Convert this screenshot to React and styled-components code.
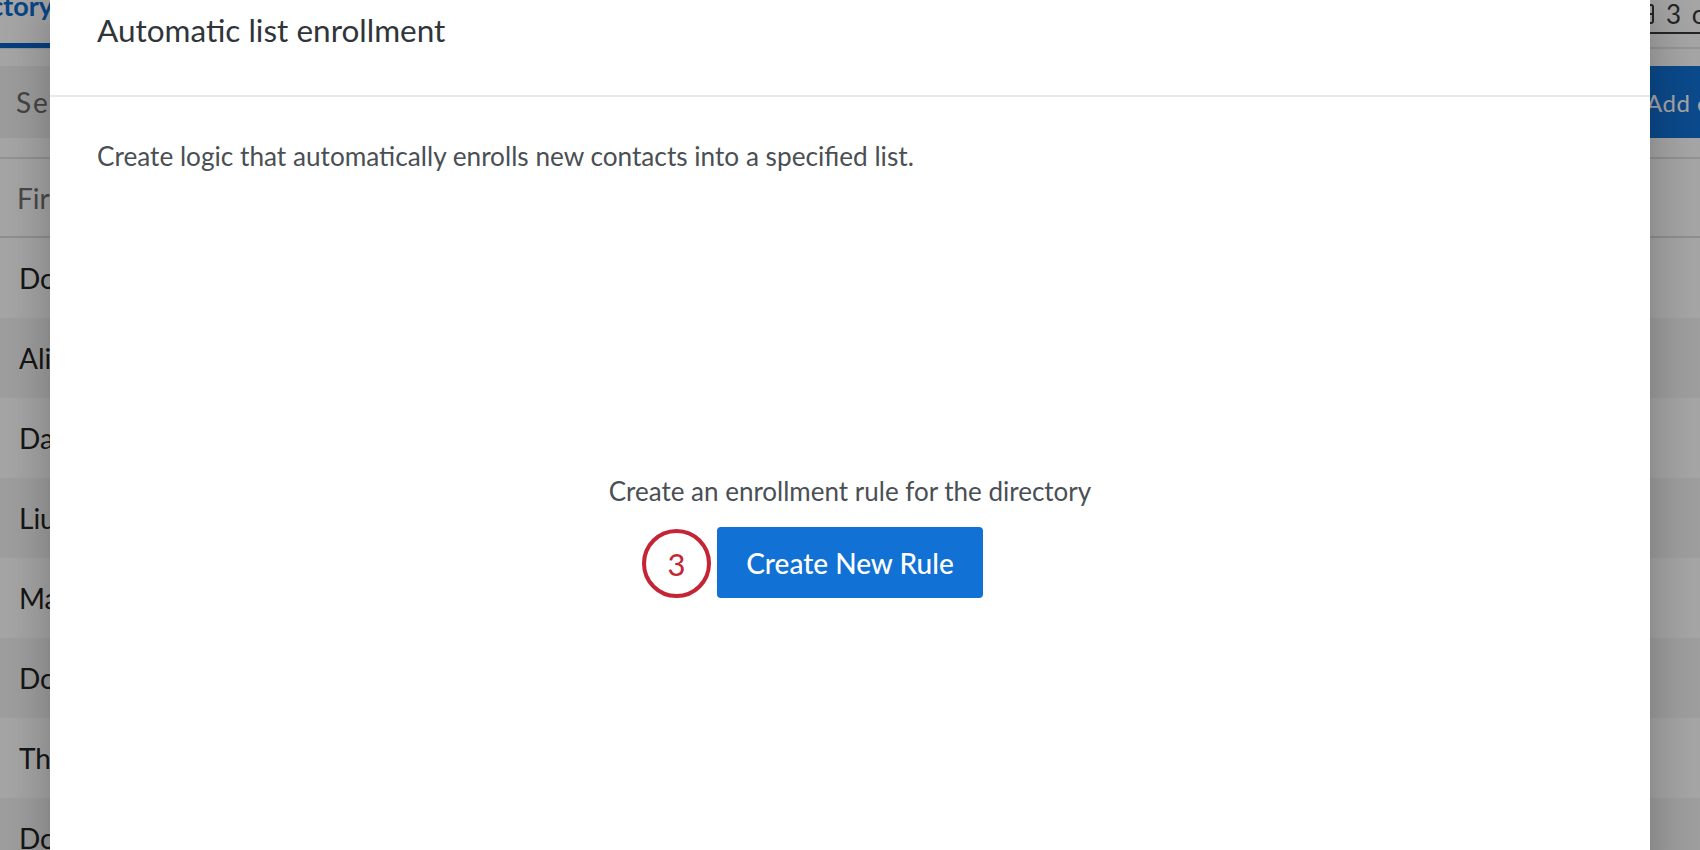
import React from "react";
import styled, { createGlobalStyle } from "styled-components";

const GlobalStyle = createGlobalStyle`
  html, body {
    margin: 0;
    padding: 0;
    background: #ffffff;
    font-family: Lato, "Open Sans", "Liberation Sans", sans-serif;
  }
`;

const rows = ["Dora", "Alice", "Daniel", "Liu", "Maria", "Dominic", "Thomas", "Donna"];

const App = () => {
  return (
    <Page>
      <GlobalStyle />
      <Directory>
        <TopBar>
          <Tab>Directory</Tab>
          <Selection>
            <svg width="14" height="20" viewBox="0 0 14 20" fill="none" stroke="#3a3a3a" strokeWidth="2">
              <rect x="1" y="1" width="12" height="18" rx="2" />
              <line x1="1" y1="10" x2="13" y2="10" />
            </svg>
            <span>3 of 8 selected</span>
          </Selection>
        </TopBar>
        <Toolbar>
          <Search>Search contacts</Search>
          <AddButton>Add contacts</AddButton>
        </Toolbar>
        <HeaderRow>First Name</HeaderRow>
        {rows.map((name, i) => (
          <Row key={i} $striped={i % 2 === 1}>
            {name}
          </Row>
        ))}
      </Directory>

      <Overlay />

      <Modal>
        <ModalHeader>
          <Title>Automatic list enrollment</Title>
        </ModalHeader>
        <ModalBody>
          <Description>
            Create logic that automatically enrolls new contacts into a specified list.
          </Description>
          <Empty>
            <EmptyText>Create an enrollment rule for the directory</EmptyText>
            <ButtonWrap>
              <Marker>3</Marker>
              <PrimaryButton>Create New Rule</PrimaryButton>
            </ButtonWrap>
          </Empty>
        </ModalBody>
      </Modal>
    </Page>
  );
};

const Page = styled.div`
  position: relative;
  width: 1700px;
  height: 850px;
  overflow: hidden;
  background: #ffffff;
`;

const Directory = styled.div`
  display: flex;
  flex-direction: column;
`;

const TopBar = styled.div`
  height: 47px;
  display: flex;
  justify-content: space-between;
  align-items: flex-start;
  border-bottom: 2px solid #e6e6e6;
`;

const Tab = styled.div`
  margin-left: -65px;
  margin-top: -9px;
  height: 52px;
  padding: 0 4px;
  border-bottom: 5px solid #0b62c4;
  color: #0d6ad0;
  font-size: 27px;
  font-weight: 700;
  line-height: 30px;
  box-sizing: content-box;
`;

const Selection = styled.div`
  display: flex;
  align-items: center;
  gap: 12px;
  margin-left: auto;
  margin-right: -168px;
  margin-top: -5px;
  height: 37px;
  padding: 0 4px;
  border-bottom: 2px solid #3a3a3a;
  color: #3a3a3a;
  font-size: 26px;
  letter-spacing: 2px;
`;

const Toolbar = styled.div`
  display: flex;
  justify-content: space-between;
  align-items: center;
  height: 72px;
  margin-top: 17px;
  padding-bottom: 19px;
  border-bottom: 2px solid #e2e2e2;
`;

const Search = styled.div`
  width: 420px;
  height: 72px;
  padding-left: 16px;
  display: flex;
  align-items: center;
  background: #f2f2f2;
  color: #6b6b6b;
  font-size: 28px;
  letter-spacing: 2px;
`;

const AddButton = styled.div`
  width: 260px;
  height: 72px;
  padding-left: 36px;
  box-sizing: border-box;
  margin-right: -170px;
  margin-left: auto;
  display: flex;
  align-items: center;
  background: #1272d8;
  color: #ffffff;
  font-size: 24px;
  letter-spacing: 0.5px;
  white-space: nowrap;
`;

const HeaderRow = styled.div`
  height: 77px;
  padding-left: 17px;
  display: flex;
  align-items: center;
  border-bottom: 2px solid #dedede;
  color: #707070;
  font-size: 28px;
`;

const Row = styled.div`
  height: 80px;
  flex-shrink: 0;
  padding-left: 19px;
  display: flex;
  align-items: center;
  background: ${(p) => (p.$striped ? "#f4f4f4" : "#ffffff")};
  color: #222222;
  font-size: 28px;
`;

const Overlay = styled.div`
  position: absolute;
  inset: 0;
  background: rgba(0, 0, 0, 0.35);
`;

const Modal = styled.div`
  position: absolute;
  left: 50px;
  top: 0;
  width: 1600px;
  height: 900px;
  background: #ffffff;
  box-shadow: 0 0 50px rgba(0, 0, 0, 0.28);
  display: flex;
  flex-direction: column;
`;

const ModalHeader = styled.div`
  height: 95px;
  padding-left: 47px;
  display: flex;
  align-items: flex-start;
  border-bottom: 2px solid #e9e9e9;
`;

const Title = styled.h2`
  margin: 12px 0 0;
  color: #30353a;
  font-size: 31.5px;
  font-weight: 400;
  line-height: 36px;
`;

const ModalBody = styled.div`
  padding: 0 47px;
  display: flex;
  flex-direction: column;
`;

const Description = styled.p`
  margin: 43px 0 0;
  color: #4a4f54;
  font-size: 26.2px;
  line-height: 32px;
`;

const Empty = styled.div`
  margin-top: 304px;
  display: flex;
  flex-direction: column;
  align-items: center;
  gap: 21px;
`;

const EmptyText = styled.div`
  color: #4a4f54;
  font-size: 26px;
  line-height: 30px;
`;

const ButtonWrap = styled.div`
  position: relative;
`;

const PrimaryButton = styled.button`
  width: 266px;
  height: 71px;
  border: none;
  border-radius: 4px;
  background: #1271d4;
  color: #ffffff;
  font-family: inherit;
  font-size: 28px;
  font-weight: 500;
  cursor: pointer;
`;

const Marker = styled.div`
  position: absolute;
  left: -75px;
  top: 2px;
  width: 61px;
  height: 61px;
  border: 4px solid #c42434;
  border-radius: 50%;
  display: flex;
  align-items: center;
  justify-content: center;
  color: #c42434;
  font-size: 31px;
  background: #ffffff;
`;

export default App;
